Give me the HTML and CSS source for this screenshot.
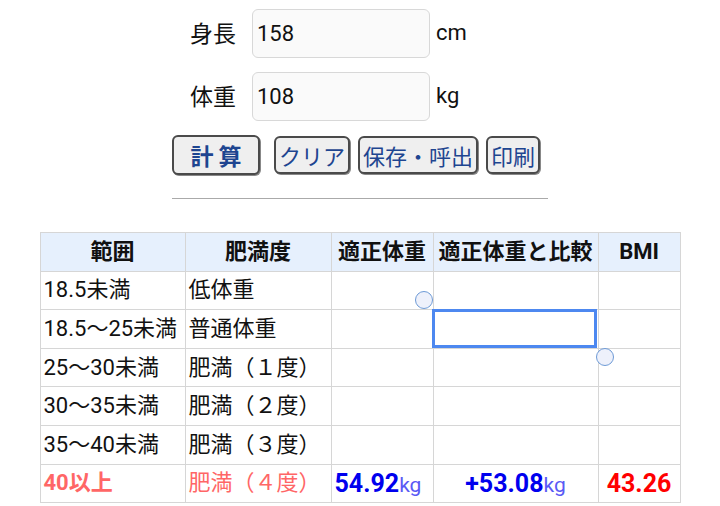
FILE: index.html
```html
<!DOCTYPE html>
<html lang="ja">

<head>
    <meta charset="UTF-8">
    <meta name="viewport" content="width=device-width, initial-scale=1.0">
    <title>BMI計算</title>
    <link rel="stylesheet" href="styles.css">
</head>

<body>
    <div class="form">
        <div class="row">
            <span class="label">身長</span>
            <input type="text" class="field" value="158">
            <span class="unit">cm</span>
        </div>
        <div class="row">
            <span class="label">体重</span>
            <input type="text" class="field" value="108">
            <span class="unit">kg</span>
        </div>
        <div class="buttons">
            <button class="btn btn-calc">計&nbsp;算</button>
            <button class="btn">クリア</button>
            <button class="btn">保存・呼出</button>
            <button class="btn">印刷</button>
        </div>
        <hr class="line">
    </div>

    <div class="result">
        <table class="bmi">
            <tr>
                <th class="c1">範囲</th>
                <th class="c2">肥満度</th>
                <th class="c3">適正体重</th>
                <th class="c4">適正体重と比較</th>
                <th class="c5">BMI</th>
            </tr>
            <tr>
                <td>18.5未満</td>
                <td>低体重</td>
                <td></td>
                <td></td>
                <td></td>
            </tr>
            <tr>
                <td>18.5〜25未満</td>
                <td>普通体重</td>
                <td></td>
                <td></td>
                <td></td>
            </tr>
            <tr>
                <td>25〜30未満</td>
                <td>肥満（１度）</td>
                <td></td>
                <td></td>
                <td></td>
            </tr>
            <tr>
                <td>30〜35未満</td>
                <td>肥満（２度）</td>
                <td></td>
                <td></td>
                <td></td>
            </tr>
            <tr>
                <td>35〜40未満</td>
                <td>肥満（３度）</td>
                <td></td>
                <td></td>
                <td></td>
            </tr>
            <tr class="hit">
                <td class="range">40以上</td>
                <td>肥満（４度）</td>
                <td class="num"><b>54.92</b><span class="kg">kg</span></td>
                <td class="num center"><b>+53.08</b><span class="kg">kg</span></td>
                <td class="center"><b class="bmi-val">43.26</b></td>
            </tr>
        </table>
        <!-- selection overlay -->
        <div class="sel"></div>
        <div class="handle handle-a"></div>
        <div class="handle handle-b"></div>
    </div>
</body>

</html>
```

FILE: styles.css
```css
body {
    margin: 0;
    font-family: Roboto, "Noto Sans CJK JP", sans-serif;
    color: #111;
    background-color: #fff;
}

.form {
    width: 376px;
    margin: 0 auto;
    padding-top: 9px;
}

.row {
    display: flex;
    align-items: center;
    height: 49px;
    margin-bottom: 14px;
    padding-left: 18px;
    font-size: 22px;
}

.label {
    width: 62px;
    font-size: 23px;
    margin-top: -4px;
}

.field {
    width: 178px;
    height: 49px;
    box-sizing: border-box;
    padding: 0 4px;
    font-family: Roboto, sans-serif;
    font-size: 22px;
    color: #111;
    background-color: #fafafa;
    border: 1px solid #d8d8d8;
    border-radius: 6px;
}

.unit {
    margin-left: 6px;
    margin-top: -2px;
}

.buttons {
    display: flex;
    align-items: center;
    margin-top: 6px;
}

.btn {
    height: 38px;
    padding: 0 3px;
    font-family: "Noto Sans CJK JP", sans-serif;
    font-size: 22px;
    line-height: 1;
    color: #1e4590;
    background-color: #efefef;
    border: 2px solid #4a4a4a;
    border-radius: 6px;
    box-shadow: 1px 1px 0 #888;
    margin-right: 8px;
}

.btn-calc {
    width: 88px;
    height: 40px;
    font-weight: bold;
    font-size: 23px;
    margin-right: 14px;
}

.line {
    margin: 23px 0 0;
    border: none;
    border-top: 1px solid #aaa;
}

.result {
    position: relative;
    width: 641px;
    margin: 33px auto 0;
}

.bmi {
    width: 640px;
    border-collapse: collapse;
    table-layout: fixed;
    font-size: 22px;
}

.bmi th,
.bmi td {
    height: 37.6px;
    padding: 0 3px;
    border: 1px solid #d6d6d6;
    white-space: nowrap;
    line-height: 1;
}

.bmi th {
    background-color: #e6f0fd;
    font-weight: bold;
    text-align: center;
}

.c1 { width: 138px; }
.c2 { width: 139px; }
.c3 { width: 95px; }
.c4 { width: 158px; }
.c5 { width: 75px; }

.hit td {
    color: #ff6666;
}

.hit .range {
    font-weight: bold;
}

.num b {
    font-size: 25px;
    color: #0000ee;
}

.kg {
    font-size: 21px;
    color: #5a5af5;
}

.center {
    text-align: center;
}

.bmi-val {
    font-size: 25px;
    color: #ff0000;
}

.sel {
    position: absolute;
    left: 392px;
    top: 77px;
    width: 159px;
    height: 33px;
    border: 3px solid #4d88f0;
}

.handle {
    position: absolute;
    width: 16px;
    height: 16px;
    border-radius: 50%;
    background-color: #eef1fb;
    border: 1px solid #6d9ad6;
}

.handle-a {
    left: 375px;
    top: 59px;
}

.handle-b {
    left: 556px;
    top: 116px;
}
```
